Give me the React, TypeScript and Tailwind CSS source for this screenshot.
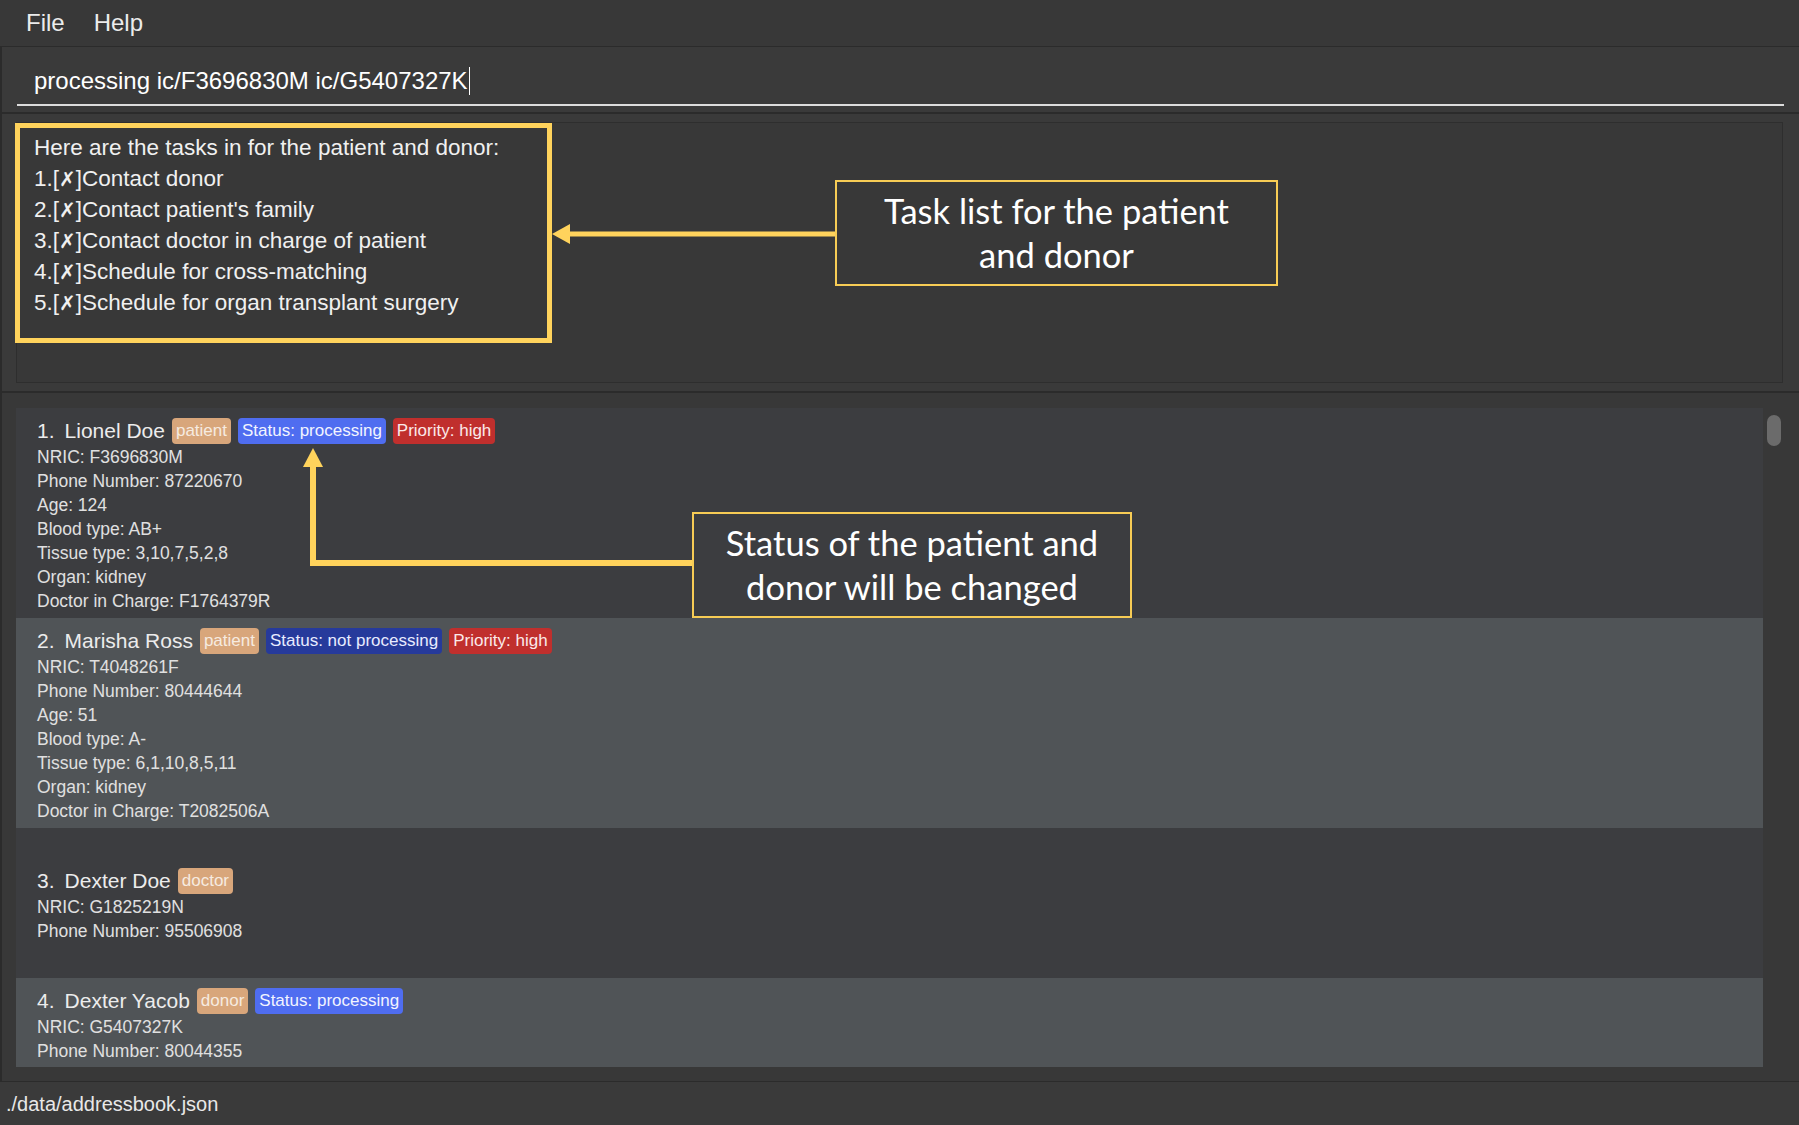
import React from "react";

type Badge = { text: string; cls: string };
type Person = { name: string; badges: Badge[]; lines: string[]; bg: string; top?: boolean };

const tan = "bg-[#d8a67b] text-[#f6ebe0]";
const blue = "bg-[#4f6df0] text-[#f2f4ff]";
const navy = "bg-[#263a9b] text-[#e8ecff]";
const red = "bg-[#c02f2d] text-[#fbe9e9]";

const people: Person[] = [
  {
    name: "Lionel Doe",
    badges: [
      { text: "patient", cls: tan },
      { text: "Status: processing", cls: blue },
      { text: "Priority: high", cls: red },
    ],
    lines: [
      "NRIC: F3696830M",
      "Phone Number: 87220670",
      "Age: 124",
      "Blood type: AB+",
      "Tissue type: 3,10,7,5,2,8",
      "Organ: kidney",
      "Doctor in Charge: F1764379R",
    ],
    bg: "bg-[#3c3d40]",
  },
  {
    name: "Marisha Ross",
    badges: [
      { text: "patient", cls: tan },
      { text: "Status: not processing", cls: navy },
      { text: "Priority: high", cls: red },
    ],
    lines: [
      "NRIC: T4048261F",
      "Phone Number: 80444644",
      "Age: 51",
      "Blood type: A-",
      "Tissue type: 6,1,10,8,5,11",
      "Organ: kidney",
      "Doctor in Charge: T2082506A",
    ],
    bg: "bg-[#505457]",
  },
  {
    name: "Dexter Doe",
    badges: [{ text: "doctor", cls: tan }],
    lines: ["NRIC: G1825219N", "Phone Number: 95506908"],
    bg: "bg-[#3c3d40]",
  },
  {
    name: "Dexter Yacob",
    badges: [
      { text: "donor", cls: tan },
      { text: "Status: processing", cls: blue },
    ],
    lines: ["NRIC: G5407327K", "Phone Number: 80044355", "Age: 44"],
    bg: "bg-[#505457]",
    top: true,
  },
];

const tasks = [
  "Contact donor",
  "Contact patient's family",
  "Contact doctor in charge of patient",
  "Schedule for cross-matching",
  "Schedule for organ transplant surgery",
];

function Card({ p, i }: { p: Person; i: number }) {
  return (
    <div
      className={`${p.bg} min-h-[150px] shrink-0 flex flex-col ${
        p.top ? "justify-start" : "justify-center"
      } pl-[21px] pt-[9px] pb-[5px]`}
    >
      <div className="flex items-center h-[28px] gap-[7px] text-[21px] text-[#ececec]">
        <span>{i + 1}.</span>
        <span className="ml-[3px]">{p.name}</span>
        {p.badges.map((b) => (
          <span
            key={b.text}
            className={`${b.cls} h-[26px] px-[4px] rounded-[4px] text-[17px] flex items-center`}
          >
            {b.text}
          </span>
        ))}
      </div>
      <div className="text-[17.5px] leading-[24px] text-[#e0e0e0]">
        {p.lines.map((l) => (
          <div key={l}>{l}</div>
        ))}
      </div>
    </div>
  );
}

export default function App() {
  return (
    <div className="relative w-[1799px] h-[1125px] overflow-hidden bg-[#3a3a3a] flex flex-col font-['Liberation_Sans',Arial,sans-serif] text-[#e6e6e6]">
      {/* Menu bar */}
      <div className="h-[47px] shrink-0 flex items-center gap-[29px] pl-[26px] text-[24px] text-[#ececec] bg-[#383838] border-b border-[#2b2b2b]">
        <span>File</span>
        <span>Help</span>
      </div>

      {/* Command box */}
      <div className="h-[67px] shrink-0 pl-[15px] pr-[15px] pt-[11px] border-b-2 border-l-2 border-[#2b2b2b]">
        <div className="h-[48px] border-b-2 border-[#dcdcdc] flex items-center pl-[17px] text-[24px] text-white">
          <span>processing ic/F3696830M ic/G5407327K</span>
          <span className="w-[1px] h-[28px] bg-white ml-[1px]" />
        </div>
      </div>

      {/* Result display */}
      <div className="h-[279px] shrink-0 pl-[14px] pr-[16px] py-[8px] border-b-2 border-l-2 border-[#2b2b2b]">
        <div className="relative h-full bg-[#383838] border border-[#2e2e2e] pl-[17px] pt-[9px] text-[22.5px] text-[#f0f0f0]">
          <div className="h-[31px] leading-[31px]">Here are the tasks in for the patient and donor:</div>
          {tasks.map((t, i) => (
            <div key={t} className="h-[31px] leading-[31px]">
              {i + 1}.[<span className="font-['DejaVu_Sans',sans-serif] font-bold italic text-[20px] leading-none">✗</span>]{t}
            </div>
          ))}
          <div className="absolute left-[-2px] top-0 w-[537px] h-[220px] border-[5px] border-[#ffd35c]" />
        </div>
      </div>

      {/* Person list */}
      <div className="flex-1 min-h-0 flex pl-[14px] pt-[15px] pb-[14px] border-b border-l-2 border-[#2b2b2b] bg-[#383838]">
        <div className="flex-1 min-w-0 overflow-hidden flex flex-col">
          {people.map((p, i) => (
            <Card key={p.name} p={p} i={i} />
          ))}
        </div>
        <div className="w-[36px] shrink-0 pl-[4px] pt-[7px]">
          <div className="w-[14px] h-[31px] rounded-full bg-[#6b6b6b]" />
        </div>
      </div>

      {/* Status bar */}
      <div className="h-[43px] shrink-0 flex items-center pl-[6px] text-[20px] text-[#e8e8e8] bg-[#3a3a3a]">
        ./data/addressbook.json
      </div>

      {/* Annotation arrows */}
      <svg
        className="absolute left-0 top-0 pointer-events-none"
        width="1799"
        height="1125"
        viewBox="0 0 1799 1125"
      >
        <line x1="568" y1="234" x2="836" y2="234" stroke="#ffd35c" strokeWidth="5" />
        <polygon points="552,234 570,224 570,244" fill="#ffd35c" />
        <polyline
          points="313,464 313,563 693,563"
          fill="none"
          stroke="#ffd35c"
          strokeWidth="6"
        />
        <polygon points="313,448 303,467 323,467" fill="#ffd35c" />
      </svg>

      {/* Callouts */}
      <div className="absolute left-[835px] top-[180px] w-[443px] h-[106px] border-2 border-[#f7cc55] bg-[#383838] flex flex-col items-center justify-center text-[34.5px] leading-[44px] text-white font-['Lato',sans-serif]">
        <span>Task list for the patient</span>
        <span>and donor</span>
      </div>
      <div className="absolute left-[692px] top-[512px] w-[440px] h-[106px] border-2 border-[#f7cc55] bg-[#3c3d40] flex flex-col items-center justify-center text-[34.5px] leading-[44px] text-white font-['Lato',sans-serif]">
        <span>Status of the patient and</span>
        <span>donor will be changed</span>
      </div>
    </div>
  );
}
